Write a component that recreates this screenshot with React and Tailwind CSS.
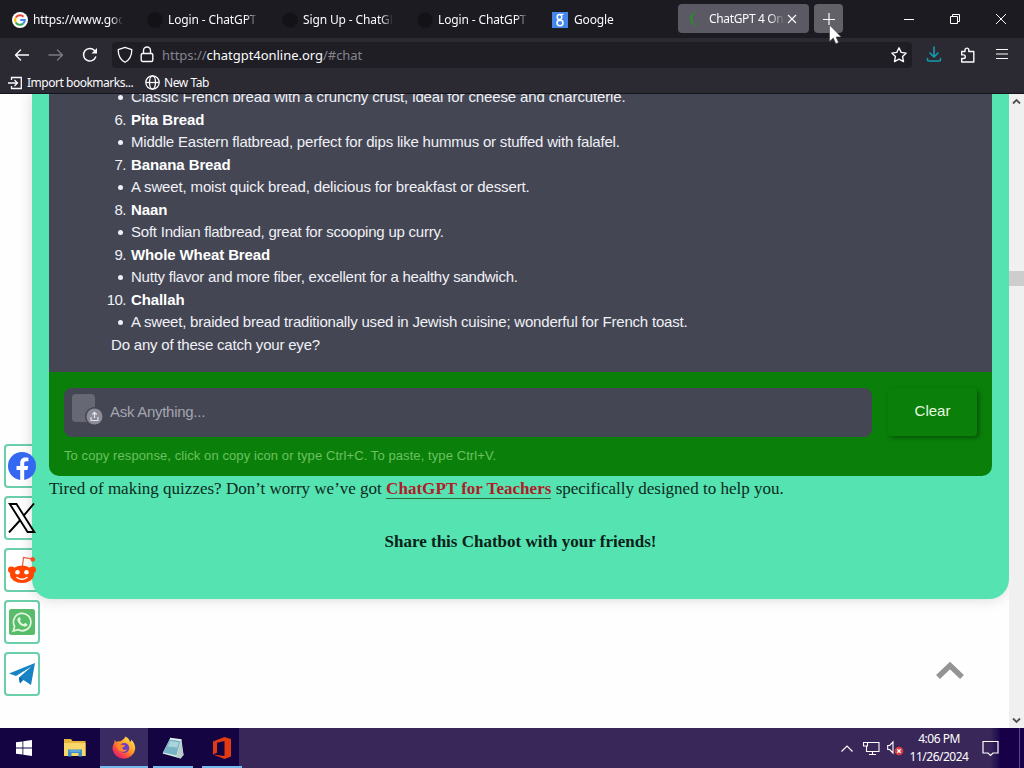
import { useState } from "react";

const TABS = [
  { id: 1, title: "https://www.google", icon: "google" },
  { id: 2, title: "Login - ChatGPT", icon: "dark" },
  { id: 3, title: "Sign Up - ChatGPT", icon: "dark" },
  { id: 4, title: "Login - ChatGPT", icon: "dark" },
  { id: 5, title: "Google", icon: "google8" },
];

const BREADS = [
  {
    n: 6,
    name: "Pita Bread",
    text: "Middle Eastern flatbread, perfect for dips like hummus or stuffed with falafel.",
    spacing: "tracking-[-0.195px]",
  },
  {
    n: 7,
    name: "Banana Bread",
    text: "A sweet, moist quick bread, delicious for breakfast or dessert.",
    spacing: "tracking-[-0.145px]",
  },
  {
    n: 8,
    name: "Naan",
    text: "Soft Indian flatbread, great for scooping up curry.",
    spacing: "tracking-[-0.225px]",
  },
  {
    n: 9,
    name: "Whole Wheat Bread",
    text: "Nutty flavor and more fiber, excellent for a healthy sandwich.",
    spacing: "tracking-[-0.23px]",
  },
  {
    n: 10,
    name: "Challah",
    text: "A sweet, braided bread traditionally used in Jewish cuisine; wonderful for French toast.",
    spacing: "tracking-[-0.195px]",
  },
];

const SHARES = ["facebook", "x", "reddit", "whatsapp", "telegram"];

export default function App() {
  return (
    <div className="flex h-[768px] w-[1024px] flex-col overflow-hidden bg-white">
      <Browser />
      <Taskbar />
    </div>
  );
}

function Browser() {
  return (
    <div className="relative flex h-[728px] flex-col">
      <TabStrip />
      <Toolbar />
      <Bookmarks />
      <div className="flex min-h-0 flex-1">
        <Page />
        <Scrollbar />
      </div>
      {/* mouse pointer */}
      <svg className="absolute left-[828px] top-[24px] z-30" width="14" height="22" viewBox="0 0 14 22">
        <path d="M1.500 1v16.500l3.800-3.600 2.500 5.800 2.700-1.200-2.400-5.600h5.100z" fill="#fff" stroke="#333" strokeWidth=".5" />
      </svg>
    </div>
  );
}

function TabStrip() {
  return (
    <div className="flex h-[38px] items-start bg-[#1c1b22] pt-1 font-['Noto_Sans',sans-serif] text-[12px] text-[#fbfbfe]">
      <div className="flex w-[678px]">
        {TABS.map((t) => (
          <div key={t.id} className="flex h-[31px] w-[135px] shrink-0 items-center pl-3">
            <TabIcon type={t.icon} />
            <span className="ml-[5px] w-[90px] overflow-hidden whitespace-nowrap tracking-[-0.13px] [mask-image:linear-gradient(to_right,#000_78px,transparent_90px)]">
              {t.title}
            </span>
          </div>
        ))}
      </div>
      <div className="flex h-[29px] w-[131px] items-center rounded-[4px] bg-[#5b5964] pl-[9px]">
        <svg width="16" height="16" viewBox="0 0 16 16">
          <path d="M8.500 .8A7.300 7.300 0 0 0 10 15.200C4.500 13.500 3.800 5.500 8.500 .8z" fill="#2c8a2c" />
        </svg>
        <span className="ml-[6px] w-[76px] overflow-hidden whitespace-nowrap tracking-[-0.35px] [mask-image:linear-gradient(to_right,#000_60px,transparent_76px)]">
          ChatGPT 4 Online
        </span>
        <svg width="14" height="14" viewBox="0 0 14 14" stroke="#fbfbfe" strokeWidth="1.100">
          <path d="M3 3l8 8M11 3l-8 8" />
        </svg>
      </div>
      <button className="ml-[5px] flex h-[29px] w-[29px] items-center justify-center rounded-[4px] bg-[#626167]">
        <svg width="14" height="14" viewBox="0 0 14 14" stroke="#fbfbfe" strokeWidth="1.200">
          <path d="M7 1v12M1 7.500h12" />
        </svg>
      </button>
      <div className="ml-[43px] flex h-[29px] items-center">
        <div className="flex w-[46px] justify-center">
          <svg width="12" height="12" viewBox="0 0 12 12" stroke="#fff">
            <path d="M1 6.500h10" />
          </svg>
        </div>
        <div className="flex w-[46px] justify-center">
          <svg width="12" height="12" viewBox="0 0 12 12" fill="none" stroke="#fff">
            <path d="M1.500 3.500h7v7h-7zM3.500 3.500v-2h7v7h-2" />
          </svg>
        </div>
        <div className="flex w-[46px] justify-center">
          <svg width="12" height="12" viewBox="0 0 12 12" stroke="#fff">
            <path d="M1 1l10 10M11 1L1 11" />
          </svg>
        </div>
      </div>
    </div>
  );
}

function TabIcon({ type }) {
  if (type === "google")
    return (
      <svg width="16" height="16" viewBox="0 0 16 16" fill="none" strokeWidth="2">
        <circle cx="8" cy="8" r="8" fill="#fff" stroke="none" />
        <path d="M3.800 5.600A4.800 4.800 0 0 1 11.500 4.700" stroke="#ea4335" />
        <path d="M3.800 5.600a4.800 4.800 0 0 0 0 4.800" stroke="#fbbc05" />
        <path d="M3.800 10.400a4.800 4.800 0 0 0 7.500 1.100" stroke="#34a853" />
        <path d="M11.300 11.500A4.800 4.800 0 0 0 12.800 8H8.200" stroke="#4285f4" />
      </svg>
    );
  if (type === "google8")
    return (
      <svg className="mr-px" width="16" height="16" viewBox="0 0 16 16" fill="none" stroke="#fff">
        <rect width="16" height="16" fill="#4486ea" stroke="none" />
        <ellipse cx="7.500" cy="5" rx="2.300" ry="2.600" strokeWidth="1.500" />
        <ellipse cx="8" cy="11" rx="3" ry="2.700" strokeWidth="1.500" />
        <path d="M8.500 2.400h3" strokeWidth="1.200" />
      </svg>
    );
  return (
    <svg width="16" height="16" viewBox="0 0 16 16">
      <circle cx="8" cy="8" r="7" fill="#131217" stroke="#141318" strokeWidth="2" strokeDasharray="4 1.500" />
    </svg>
  );
}

function Toolbar() {
  return (
    <div className="flex h-[34px] items-center bg-[#2b2a33] pl-[14px] text-[#fbfbfe]">
      <svg width="16" height="16" viewBox="0 0 16 16" fill="none" stroke="currentColor" strokeWidth="1.400" strokeLinecap="round" strokeLinejoin="round">
        <path d="M14.500 8h-13M6.500 3L1.500 8l5 5" />
      </svg>
      <svg className="ml-[18px] text-[#7b7a83]" width="16" height="16" viewBox="0 0 16 16" fill="none" stroke="currentColor" strokeWidth="1.300" strokeLinecap="round" strokeLinejoin="round">
        <path d="M1 8h13M9.500 3l5 5-5 5" />
      </svg>
      <svg className="ml-[18px]" width="16" height="16" viewBox="0 0 16 16" fill="none" stroke="currentColor" strokeWidth="1.500" strokeLinecap="round">
        <path d="M13.700 10A6.300 6.300 0 1 1 12.500 3.500" />
        <path d="M15 1v5.500H9.500z" fill="currentColor" stroke="none" />
      </svg>
      <div className="ml-[14px] flex h-[26px] w-[800px] items-center rounded-[4px] bg-[#1f1e25] pl-[5px]">
        <svg className="mb-px" width="16" height="18" viewBox="0 0 16 18" fill="none" stroke="currentColor" strokeWidth="1.300" strokeLinejoin="round">
          <path d="M8 1.300l6.800 2.400c0 6-2 10-6.800 12.600C3.200 13.700 1.200 9.700 1.200 3.700z" />
        </svg>
        <svg className="mb-px ml-[7px]" width="14" height="17" viewBox="0 0 14 17" fill="none" stroke="currentColor" strokeWidth="1.400">
          <rect x="1.200" y="7.500" width="11.600" height="8" rx="1.500" />
          <path d="M3.500 7.500V4.500a3.500 3.500 0 0 1 7 0v3" />
        </svg>
        <span className="ml-2 mt-px whitespace-nowrap font-['Noto_Sans',sans-serif] text-[13px] tracking-[-0.03px] text-[#85848d]">
          https://<span className="text-[#fbfbfe]">chatgpt4online.org</span>/#chat
        </span>
        <svg className="ml-auto mr-[4px]" width="18" height="18" viewBox="0 0 18 18" fill="none" stroke="currentColor" strokeWidth="1.400" strokeLinejoin="round">
          <path d="M9 1.800l2.200 4.600 5 .7-3.600 3.500.9 5L9 13.200l-4.500 2.400.9-5L1.800 7.100l5-.7z" />
        </svg>
      </div>
      <svg className="mb-[2px] ml-[14px] text-[#159caf]" width="16" height="16" viewBox="0 0 16 16" fill="none" stroke="currentColor" strokeWidth="1.600" strokeLinecap="round" strokeLinejoin="round">
        <path d="M8 1v9.500M4 7l4 4 4-4M1.500 12.500v1.200c0 .8.500 1.300 1.300 1.300h10.400c.8 0 1.300-.5 1.300-1.300v-1.200" />
      </svg>
      <svg className="mb-px ml-[18px]" width="16" height="16" viewBox="0 0 16 16" fill="none" stroke="currentColor" strokeWidth="1.400" strokeLinejoin="round">
        <path d="M5 4.500V3a1.900 1.900 0 0 1 3.800 0v1.500h5V15H1.700v-3.500h1.800a1.800 1.800 0 0 0 0-3.600H1.700V4.500z" />
      </svg>
      <svg className="mb-[2px] ml-[19px]" width="14" height="14" viewBox="0 0 14 14" stroke="currentColor" strokeWidth="1.200">
        <path d="M1 2.500h12M1 7h12M1 11.500h12" />
      </svg>
    </div>
  );
}

function Bookmarks() {
  return (
    <div className="flex h-[22px] items-center border-b border-[#15141a] bg-[#2b2a33] pl-2 font-['Noto_Sans',sans-serif] text-[12px] text-[#fbfbfe]">
      <svg width="15" height="14" viewBox="0 0 15 14" fill="none" stroke="currentColor" strokeWidth="1.300">
        <path d="M3.500 4V1.500h9.800v11H3.500V10M0 7h9M6.500 4L9.500 7l-3 3" />
      </svg>
      <span className="ml-1 w-[112px] whitespace-nowrap tracking-[-0.48px]">Import bookmarks...</span>
      <svg className="ml-[6px]" width="15" height="15" viewBox="0 0 15 15" fill="none" stroke="currentColor" strokeWidth="1.300">
        <circle cx="7.500" cy="7.500" r="6.700" />
        <ellipse cx="7.500" cy="7.500" rx="3" ry="6.700" />
        <path d="M1 7.500h13" />
      </svg>
      <span className="ml-1 whitespace-nowrap tracking-[-0.45px]">New Tab</span>
    </div>
  );
}

function Page() {
  return (
    <div className="relative w-[1009px] overflow-hidden bg-[#fefefe]">
      {/* share buttons: frames sit under the card, logos over it */}
      <div className="absolute left-1 top-[350px] flex flex-col gap-2">
        {SHARES.map((s) => (
          <div key={s} className="h-[44px] w-[36px] rounded-[4px] border-2 border-[#6bcfaa] bg-white" />
        ))}
      </div>
      <div className="relative ml-8 h-[505px] rounded-b-[20px] bg-[#55e3b2] px-[17px] shadow-[0_0_14px_rgba(0,0,0,0.16)]">
        <Chat />
        <p className="mt-px whitespace-nowrap font-['Liberation_Serif',serif] text-[17px] leading-[23px] text-[#0c2a20]">
          Tired of making quizzes? Don’t worry we’ve got{" "}
          <a className="border-b border-[#2a6b3c] font-bold tracking-[0.03px] text-[#b01c28]">ChatGPT for Teachers</a>{" "}
          specifically designed to help you.
        </p>
        <p className="mt-[30px] text-center font-['Liberation_Serif',serif] text-[17px] font-bold leading-[23px] text-[#0a1f18]">
          Share this Chatbot with your friends!
        </p>
      </div>
      <div className="absolute left-1 top-[350px] flex flex-col gap-2">
        {SHARES.map((s) => (
          <div key={s} className="flex h-[44px] w-[36px] items-center justify-center">
            <ShareIcon name={s} />
          </div>
        ))}
      </div>
      <svg className="absolute left-[935px] top-[566px]" width="30" height="20" viewBox="0 0 30 20" fill="none" stroke="#949494" strokeWidth="5.500">
        <path d="M3 17L15 5.500 27 17" />
      </svg>
    </div>
  );
}

function Chat() {
  const [message, setMessage] = useState("");

  return (
    <div className="h-[382px] overflow-hidden rounded-b-[10px] bg-[#0a800a] font-['Liberation_Sans',sans-serif]">
      <div className="h-[278px] overflow-hidden bg-[#444654] pl-[62px] text-[15px] leading-[22.5px] text-[#f0f1f6]">
        <div className="-mt-[8px]">
          <Bullet spacing="tracking-[-0.13px]">
            Classic French bread with a crunchy crust, ideal for cheese and charcuterie.
          </Bullet>
          {BREADS.map((b) => (
            <div key={b.n}>
              <div className="-ml-[10px] flex">
                <span className="w-[25px] text-right tracking-[-0.5px]">{b.n}.</span>
                <strong className="ml-[5px] tracking-[-0.1px] text-white">{b.name}</strong>
              </div>
              <Bullet spacing={b.spacing}>{b.text}</Bullet>
            </div>
          ))}
          <p className="tracking-[-0.2px]">Do any of these catch your eye?</p>
        </div>
      </div>
      <div className="flex px-[15px] pt-4">
        <div className="flex h-[49px] w-[808px] shrink-0 items-center rounded-lg bg-[#444654] pl-2">
          <svg className="mb-1" width="32" height="34" viewBox="0 0 32 34">
            <rect x="0" y="0" width="23" height="28" rx="4" fill="#666874" />
            <circle cx="22.500" cy="22.500" r="9.500" fill="#444654" />
            <circle cx="22.500" cy="22.500" r="8" fill="#8b8c97" />
            <path d="M19 23v3.500h7V23M22.500 24v-5.500M20.300 20.500l2.200-2.200 2.200 2.200" fill="none" stroke="#e1e1e6" strokeWidth="1.200" />
          </svg>
          <input
            value={message}
            onChange={(e) => setMessage(e.target.value)}
            placeholder="Ask Anything..."
            className="ml-[6px] flex-1 bg-transparent text-[15px] tracking-[-0.28px] text-white outline-none placeholder:text-[#a3a5af]"
          />
        </div>
        <button
          onClick={() => setMessage("")}
          className="ml-4 h-[48px] w-[89px] rounded-[4px] bg-[#0a800a] pb-px text-[15px] text-[#e8f8e0] shadow-[2px_2px_4px_rgba(0,40,0,0.5)]"
        >
          Clear
        </button>
      </div>
      <p className="mt-[10px] pl-[15px] text-[13px] leading-[18px] tracking-[0.088px] text-[#6cc060]">
        To copy response, click on copy icon or type Ctrl+C. To paste, type Ctrl+V.
      </p>
    </div>
  );
}

function Bullet({ spacing, children }) {
  return (
    <div className={`flex items-center whitespace-nowrap ${spacing}`}>
      <span className="ml-[7px] mr-[8px] h-[5px] w-[5px] rounded-full bg-[#f0f1f6]" />
      {children}
    </div>
  );
}

function ShareIcon({ name }) {
  if (name === "facebook")
    return (
      <svg width="28" height="28" viewBox="0 0 28 28">
        <circle cx="14" cy="14" r="14" fill="#3468f0" />
        <path d="M12.200 28V18H8.500v-4h3.700v-2.700c0-3.800 2.100-5.700 5.300-5.700 1.300 0 2.200.1 2.900.2v3.500h-2c-1.700 0-2.200.9-2.200 2.200V14h4l-.7 4h-3.300v10z" fill="#fff" />
      </svg>
    );
  if (name === "x")
    return (
      <svg width="28" height="30" viewBox="0 0 28 30" fill="none" stroke="#000" strokeWidth="1.900">
        <path d="M1.800 1h6.700l17.800 28h-6.700z" />
        <path d="M26 .5L15.700 12.700M12.300 17L1 29.500" />
      </svg>
    );
  if (name === "reddit")
    return (
      <svg width="28" height="28" viewBox="0 0 28 28">
        <path d="M14.500 10l1-8.500 8 1.400" fill="none" stroke="#ee5a3a" strokeWidth="1.200" />
        <circle cx="24.800" cy="3.400" r="2.300" fill="#f4511e" />
        <circle cx="3.300" cy="13.800" r="3.300" fill="#ff4500" />
        <circle cx="24.700" cy="13.800" r="3.300" fill="#ff4500" />
        <ellipse cx="14" cy="18.200" rx="12" ry="8.800" fill="#ff4500" />
        <circle cx="9.500" cy="16.200" r="2.300" fill="#fff" />
        <circle cx="18.500" cy="16.200" r="2.300" fill="#fff" />
        <path d="M9 21.500c3 2.200 7 2.200 10 0" fill="none" stroke="#fff" strokeWidth="1.400" strokeLinecap="round" />
      </svg>
    );
  if (name === "whatsapp")
    return (
      <svg width="26" height="26" viewBox="0 0 26 26">
        <rect width="26" height="26" rx="2.500" fill="#58bd6a" />
        <path d="M4.300 22l1.300-4.700a8.700 8.700 0 1 1 3.300 3.300z" fill="none" stroke="#e2f6dd" strokeWidth="1.700" />
        <path
          d="M9.800 8.300c.4-.4 1-.3 1.200.2l.8 1.800c.1.400-.6 1.200-.9 1.500.9 1.800 2.100 2.800 3.900 3.500.4-.4 1-1.300 1.400-1.200l1.900 1c.4.200.4.400.2 1-.4 1.100-1.900 1.800-3 1.500-3.600-.8-6-3.200-6.900-6.200-.3-1.100.3-2.300 1.400-3.100z"
          fill="#e2f6dd"
        />
      </svg>
    );
  return (
    <svg width="26" height="22" viewBox="0 0 26 22">
      <path d="M0 10.500L26 0l-4 22-7.500-5L11 20.500l-1-6L22.500 3.500 7 13z" fill="#1583c4" />
      <path d="M10 14.500L11 20.500l1.800-5z" fill="#0b5f98" />
    </svg>
  );
}

function Scrollbar() {
  return (
    <div className="flex w-[15px] flex-col items-center justify-between bg-[#f0f0f0]">
      <svg className="mt-1" width="9" height="7" viewBox="0 0 9 7" fill="none" stroke="#505050" strokeWidth="1.800">
        <path d="M1 5.500L4.500 2 8 5.500" />
      </svg>
      <div className="-mt-[265px] h-[15px] w-full bg-[#cdcdcd]" />
      <svg className="mb-1" width="9" height="7" viewBox="0 0 9 7" fill="none" stroke="#505050" strokeWidth="1.800">
        <path d="M1 1.500L4.500 5 8 1.500" />
      </svg>
    </div>
  );
}

function Taskbar() {
  return (
    <div className="flex h-[40px] bg-[#392759] font-['Noto_Sans',sans-serif] text-white">
      <div className="flex h-full w-[239px] bg-[#150442]">
        <div className="flex w-[48px] shrink-0 items-center justify-center">
          <svg width="16" height="16" viewBox="0 0 16 16" fill="#fff">
            <path d="M0 2.300l6.500-.9v6.200H0zM7.300 1.300L16 0v7.600H7.300zM0 8.400h6.500v6.200L0 13.700zM7.300 8.400H16V16l-8.700-1.300z" />
          </svg>
        </div>
        <div className="flex w-[52px] shrink-0 items-center justify-center pl-px">
          <svg width="22" height="20" viewBox="0 0 22 20">
            <path d="M0 1h7l1.500 2H21.500V18H0z" fill="#e8b53c" />
            <path d="M0 5h21.500v13H0z" fill="#f9d768" />
            <path d="M4 18.500v-7h14v7h-3.500v-3.500h-7v3.500z" fill="#3a8ecb" />
            <path d="M5.500 13h11" stroke="#7dc1ea" />
          </svg>
        </div>
        <AppSlot active>
          <svg width="24" height="24" viewBox="0 0 24 24">
            <defs>
              <linearGradient id="fox" x1=".85" y1=".1" x2=".2" y2=".95">
                <stop offset="0" stopColor="#ffe14d" />
                <stop offset=".45" stopColor="#ff9424" />
                <stop offset=".8" stopColor="#f8394f" />
                <stop offset="1" stopColor="#d82272" />
              </linearGradient>
            </defs>
            <path d="M13.500.5c3 1.500 4 3.500 4.500 5.500 1-.5 1.300-1.500 1-2.500 3 2.500 4.500 6 4.200 9.700A11.500 11.500 0 0 1 .5 13c0-3 1-5 2-6.500V4l2 2c1-.7 2.300-.8 3.500-.6C9.500 4.500 12 3.500 13.500.5z" fill="url(#fox)" />
            <circle cx="12.200" cy="12" r="5" fill="#6c3fc6" />
            <path d="M4.500 9c2-1.500 4-.7 5.700-.2 1.400.4 2.500.2 3 .8-.5 1.700-2.500 1-3 2.400.5 2 2.500 2.500 5 1.500-1.800 3-6.500 3-8.500.5-1-1.500-2-3-2.200-5z" fill="#ff8a27" />
          </svg>
        </AppSlot>
        <AppSlot>
          <svg width="24" height="24" viewBox="0 0 24 24">
            <path d="M9 2.500l11.500 1.500 2 15-3 3.500L1.500 17.500z" fill="#d7e9e6" />
            <path d="M9 3.500L19.500 5 15.500 19.500 2 16.500z" fill="#78b4c4" />
            <path d="M9.500 5l8.500 1.200-1.700 5.300-9.500-1z" fill="#a9d5dc" />
            <path d="M9 2.500l11.500 1.500" stroke="#eef5f3" strokeWidth="1.500" />
            <path d="M15.500 21L20 5.500 22.500 19l-3 3.500z" fill="#b9ceca" />
          </svg>
        </AppSlot>
        <AppSlot>
          <svg width="20" height="22" viewBox="0 0 20 22">
            <path d="M1 4.500L12.500 0 19 2v17.500L12.500 22 1 17.500l11.500 1.500V4L5 5.800v10L1 17.500z" fill="#e23a13" />
          </svg>
        </AppSlot>
      </div>
      <div className="ml-auto flex items-center">
        <svg width="14" height="9" viewBox="0 0 14 9" fill="none" stroke="#fff" strokeWidth="1.200">
          <path d="M1.500 7.500L7 2l5.500 5.500" />
        </svg>
        <svg className="ml-[9px]" width="17" height="15" viewBox="0 0 17 15" fill="none" stroke="#fff" strokeWidth="1.100">
          <path d="M5 1.500h11v9H3.500V5M6 13.500h7M9.500 10.500v3M.5 1.500h4v3.500h-4z" />
        </svg>
        <svg className="ml-[7px]" width="17" height="16" viewBox="0 0 17 16" fill="none" stroke="#fff">
          <path d="M.7 5.500h2L6 2v11L2.700 9.500h-2z" strokeWidth="1.100" />
          <circle cx="12" cy="11" r="4.300" fill="#d83c40" stroke="none" />
          <path d="M10.300 9.300l3.400 3.400M13.700 9.300l-3.400 3.400" strokeWidth="1.300" />
        </svg>
        <div className="ml-[4px] w-[62px] whitespace-nowrap text-center text-[12px] leading-[18px] tracking-[-0.5px]">
          <div>4:06 PM</div>
          <div>11/26/2024</div>
        </div>
      </div>
      <div className="ml-[12px] flex w-[42px] items-center bg-linear-to-r from-[#392759] from-20% to-[#180048] to-45%">
        <svg width="17" height="17" viewBox="0 0 17 17" fill="none" stroke="#fff" strokeWidth="1.200">
          <path d="M1 1.500h15v11.500h-5L8.500 15.500 6 13H1z" />
        </svg>
        <div className="ml-auto mr-1 h-full w-px bg-[#5a4a80]" />
      </div>
    </div>
  );
}

function AppSlot({ active, children }) {
  return (
    <div className={`flex h-full shrink-0 flex-col items-center ${active ? "w-[48px] bg-[#3a2c63]" : "w-[49px]"}`}>
      <div className="flex flex-1 items-center justify-center pt-px">{children}</div>
      <div className={`h-[2px] bg-[#76b9ed] ${active ? "w-full" : "w-[40px]"}`} />
    </div>
  );
}
